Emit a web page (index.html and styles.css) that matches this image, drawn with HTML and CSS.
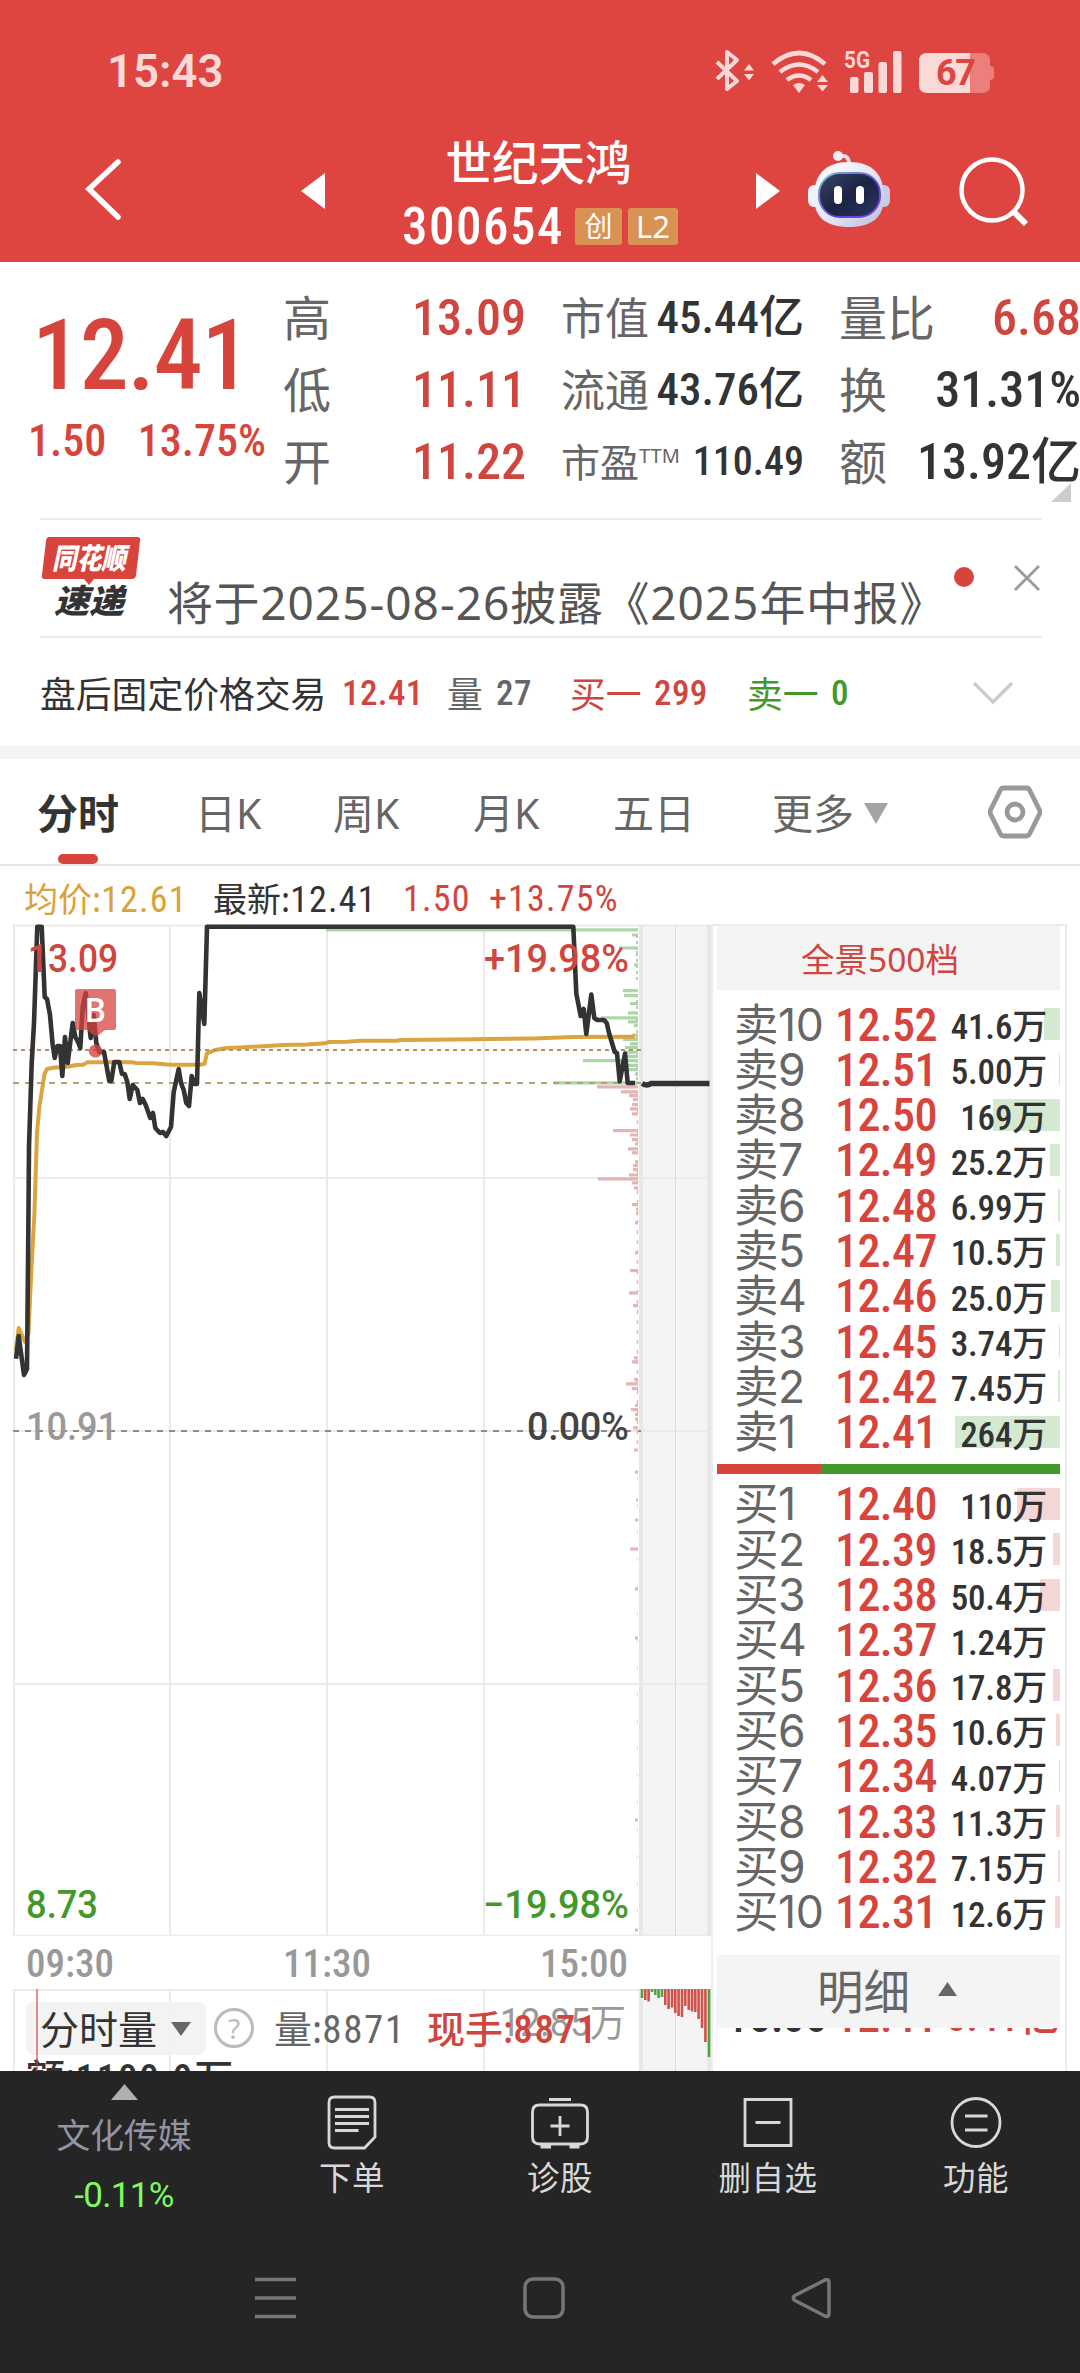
FILE: index.html
```html
<!DOCTYPE html>
<html lang="zh-CN">
<head>
<meta charset="utf-8">
<title>世纪天鸿 300654</title>
<link rel="stylesheet" href="styles.css">
</head>
<body>
<header class="header">
  <div class="status">
    <span class="clock">15:43</span>
    <svg class="status-icons" width="284" height="46" viewBox="714 49 284 46">
      <g fill="none" stroke="#fad9d7" stroke-width="4">
        <path d="M717 64l20 19-10 8V54l10 8-20 19" stroke-linejoin="round"/>
        <path d="M773 66q26-22 52 0M780 74q19-15 38 0M787 82q12-9 24 0" stroke-width="4.6"/>
      </g>
      <g fill="#fad9d7">
        <path d="M744 72.500l5-6.500 5 6.500zM744 76l5 6.500 5-6.500zM817 84l5.500-7 5.500 7zM817 87l5.500 6.500 5.500-6.500zM793 87q6-4 12 0l-6 8z"/>
        <rect x="850" y="79" width="8.500" height="16" rx="2"/><rect x="864" y="74" width="9" height="21" rx="2"/>
        <rect x="878.500" y="64" width="8.500" height="31" rx="2"/><rect x="893" y="53" width="8.500" height="42" rx="2"/>
        <path d="M927 55h43v40h-43q-8 0-8-8V63q0-8 8-8z"/>
        <path d="M970 55h12q8 0 8 8v5q4 0 4 4v6q0 4-4 4v5q0 8-8 8h-12z" fill="#ea7f7c"/>
        <text x="844" y="70" font-size="23" font-weight="700" textLength="26" lengthAdjust="spacingAndGlyphs">5G</text>
      </g>
      <text class="charge" x="936" y="87" font-size="36" font-weight="700" textLength="40">67</text>
    </svg>
  </div>
  <div class="titlebar">
    <svg class="back" width="40" height="66" viewBox="0 0 40 66"><path d="M36 6L7 33l29 28" fill="none" stroke="#fff" stroke-width="5.500" stroke-linecap="round"/></svg>
    <svg class="prev" width="24" height="38" viewBox="0 0 24 38"><path d="M24 1v36L0 19z" fill="#fff"/></svg>
    <div class="stock">
      <div class="name">世纪天鸿</div>
      <div class="code"><span class="num">300654</span><b>创</b><b class="l2">L2</b></div>
    </div>
    <svg class="next" width="24" height="38" viewBox="0 0 24 38"><path d="M0 1v36l24-18z" fill="#fff"/></svg>
    <svg class="robot" width="82" height="82" viewBox="0 0 82 82">
      <defs><linearGradient id="shell" x1="0" y1="0" x2="1" y2="1"><stop offset="0" stop-color="#fff"/><stop offset=".55" stop-color="#e4e4f5"/><stop offset="1" stop-color="#b9bce0"/></linearGradient>
      <linearGradient id="visor" x1="0" y1="0" x2="1" y2="1"><stop offset="0" stop-color="#3a4468"/><stop offset=".5" stop-color="#1b2444"/><stop offset="1" stop-color="#2c3660"/></linearGradient>
      <linearGradient id="rim" x1="0" y1="0" x2="1" y2="1"><stop offset="0" stop-color="#7cc4d8"/><stop offset=".6" stop-color="#5a3fd0"/><stop offset="1" stop-color="#7c4be0"/></linearGradient></defs>
      <path d="M31 9q10-2 10 8" fill="none" stroke="#dcdcf0" stroke-width="4"/><circle cx="30" cy="9" r="5" fill="#efeffa"/>
      <rect x="0" y="38" width="12" height="22" rx="6" fill="#f2f2fb"/><rect x="70" y="38" width="12" height="22" rx="6" fill="#c8cae8"/>
      <path d="M41 15C65 15 76 28 76 50C76 71 63 80 41 80S6 71 6 50C6 28 17 15 41 15z" fill="url(#shell)"/>
      <rect x="11" y="26" width="61" height="44" rx="21" fill="url(#visor)" stroke="url(#rim)" stroke-width="2"/>
      <rect x="26" y="39" width="8" height="18" rx="4" fill="#fff"/><rect x="48" y="39" width="8" height="18" rx="4" fill="#fff"/>
    </svg>
    <svg class="search" width="70" height="70" viewBox="0 0 70 70"><g fill="none" stroke="#fff" stroke-width="4.500"><circle cx="34" cy="34" r="30.500"/><path d="M56 56l12 12" stroke-width="6"/></g></svg>
  </div>
</header>

<section class="quote">
  <div class="last">
    <div class="num big">12.41</div>
    <div class="num chg"><span>1.50</span><span>13.75%</span></div>
  </div>
  <div class="stats c1">
    <p><span>高</span><em class="num up">13.09</em></p>
    <p><span>低</span><em class="num up">11.11</em></p>
    <p><span>开</span><em class="num up">11.22</em></p>
  </div>
  <div class="stats c2">
    <p><span>市值</span><em class="num">45.44亿</em></p>
    <p><span>流通</span><em class="num">43.76亿</em></p>
    <p class="pe"><span>市盈<sup>TTM</sup></span><em class="num">110.49</em></p>
  </div>
  <div class="stats c3">
    <p><span>量比</span><em class="num up">6.68</em></p>
    <p><span>换</span><em class="num">31.31%</em></p>
    <p><span>额</span><em class="num">13.92亿</em></p>
  </div>
  <i class="corner"></i>
</section>

<section class="notice">
  <svg class="logo" width="100" height="86" viewBox="0 0 100 86">
    <path d="M8 3h88q4 0 3 4l-4 34q-.500 4-4 4H53l-5 6-5-6H4q-4 0-3-4L5 7q.500-4 3-4z" fill="#d8433b"/>
    <text x="11" y="35" class="logo-a" textLength="74" lengthAdjust="spacingAndGlyphs">同花顺</text>
    <text x="13" y="79" class="logo-b" textLength="70" lengthAdjust="spacingAndGlyphs">速递</text>
  </svg>
  <p>将于<span>2025-08-26</span>披露《<span>2025</span>年中报》</p>
  <i class="dot"></i>
  <svg class="close" width="26" height="26" viewBox="0 0 26 26"><path d="M1 1l24 24M25 1L1 25" stroke="#999" stroke-width="2.800"/></svg>
</section>

<section class="after">
  <span class="t">盘后固定价格交易</span><span class="num up">12.41</span><span class="g">量</span><span class="num g n27">27</span>
  <span class="up t3">买一</span><span class="num up">299</span><span class="down t4">卖一</span><span class="num down n0">0</span>
  <svg width="40" height="24" viewBox="0 0 40 24"><path d="M1 1l19 19L39 1" fill="none" stroke="#ccc" stroke-width="3.500"/></svg>
</section>

<nav class="tabs">
  <span class="on">分时</span><span>日K</span><span>周K</span><span>月K</span><span>五日</span><span class="more">更多<svg width="24" height="21" viewBox="0 0 24 21"><path d="M0 0h24L12 21z" fill="#a3a3a3"/></svg></span>
  <svg class="hex" width="54" height="54" viewBox="0 0 54 54"><path d="M15.500 3h23q2 0 3 2l10 20q1 2 0 4l-10 20q-1 2-3 2h-23q-2 0-3-2l-10-20q-1-2 0-4l10-20q1-2 3-2z" fill="none" stroke="#999" stroke-width="4.800"/><circle cx="27" cy="27" r="8" fill="none" stroke="#999" stroke-width="4.800"/></svg>
</nav>

<div class="legend">
  <span class="avg">均价:<i class="num">12.61</i></span><span class="cur">最新:<i class="num">12.41</i></span><span class="num up a3">1.50</span><span class="num up">+13.75%</span>
</div>

<main class="market">
  <div class="charts">
    <svg class="price" width="711" height="1012" viewBox="0 924 711 1012">
      <rect x="641" y="925" width="69" height="1011" fill="#f4f4f4"/>
      <path d="M14 925v1011M170 925v1011M327 925v1011M484 925v1011M13 1178h697M13 1431h697M13 1684h697M13 925.500h697M13 1935.500h697" stroke="#ebebeb" stroke-width="2" fill="none"/>
      <path d="M641 925v1011M709 925v1011" stroke="#e7e7e7" stroke-width="4"/><path d="M675.500 925v1011" stroke="#dcdcdc"/>
      <path d="M13 1431h628" stroke="#8c8c8c" stroke-width="1.800" stroke-dasharray="6 6"/>
      <path d="M638 929.800H326M638 935h-6M638 948h-19M638 952.500h-2M638 964.800h-4M638 990.700h-15M638 995.700h-14M638 1003.600h-8M638 1012.900h-10M638 1017.900h-37M638 1021.800h-10M638 1025.700h-4M638 1035h-6M638 1039.300h-15M638 1043.900h-8M638 1047.500h-13M638 1052.100h-13M638 1056.400h-11M638 1060.700h-55M638 1065.400h-11M638 1069.600h-11M638 1074.300h-3M638 1078.600h-2M638 1082.900h-84" stroke="#add6a8" stroke-width="3.200"/>
      <path d="M637 935v46M637 1000v80" stroke="#add6a8" stroke-width="2" stroke-dasharray="3 3"/>
      <path d="M638 1086.800h-41M638 1091.800h-17M638 1095.700h-9M638 1099.600h-5M638 1104.600h-6M638 1108.900h-8M638 1113.900h-6M638 1130.700h-25M638 1135h-8M638 1139.600h-6M638 1144h-3M638 1148.900h-10M638 1152.900h-6M638 1161.800h-3M638 1165.700h-5M638 1169.600h-5M638 1175h-9M638 1178.900h-40M638 1182.900h-6M638 1187.900h-4M638 1204.600h-6M638 1209h-2M638 1213.600h-2M638 1222.900h-3M638 1252.900h-3M638 1270.700h-8M638 1292.900h-9M638 1305.700h-5M638 1357.900h-4M638 1361.800h-6M638 1379.600h-4M638 1383.900h-12M638 1388.600h-6M638 1405.400h-3M638 1409.600h-7M638 1414.300h-3M638 1419h-3M638 1427.900h-5M638 1450h-4M638 1472h-3M638 1500h-2M638 1520h-3M638 1549h-8M638 1589h-3M638 1638h-3M638 1820h-3M638 1930h-3" stroke="#e5b4b3" stroke-width="3.200"/>
      <path d="M637.500 1110v40M637.500 1160v290" stroke="#e5b4b3" stroke-width="1.400" stroke-dasharray="4 6"/>
      <path d="M637.500 1450v480" stroke="#f0d4d3" stroke-width="1" stroke-dasharray="3 24"/>
      <polyline fill="none" stroke="#dca43f" stroke-width="4" stroke-linejoin="round" points="16,1350 18.700,1328 25,1342 28.500,1333 31.500,1267 34.300,1217 37,1133 39.300,1107 42.500,1087 44.500,1074 47,1069 53.300,1067.700 67,1066.700 77,1065 83,1064.700 87.300,1062.300 132,1062.300 136,1063 153,1063.300 170,1064.700 200,1064.700 204.500,1063.700 207,1053.300 215,1050 227,1048 240,1047.500 267,1046 283,1045 307,1044.500 325,1043.300 329,1042 347,1041.700 360,1040.700 398,1040.700 400,1040 455,1039.600 533,1038.400 573,1037 635,1036.800"/>
      <path d="M13 1050h628" stroke="#ba8d65" stroke-width="2" stroke-dasharray="4 4"/>
      <path d="M13 1083h628" stroke="#b9a070" stroke-width="2" stroke-dasharray="6 6"/>
      <polyline fill="none" stroke="#333" stroke-width="4.600" stroke-linejoin="round" points="16,1358.700 18.700,1336 24,1375 27,1369 28.300,1233 29,1146.700 31.700,1063 34,1023 37.300,926.700 41.700,926.700 44.700,997 47,999 50,1015 52.700,1045 54.700,1058 57.300,1046 60,1046 62.300,1076 65,1037 67.700,1063 72.700,1023 75.300,1037 78,1042 80.300,1048 82.700,1007 85.700,993 90.700,1038 93.700,1015 96.300,1043 99.300,1052 104,1052 109.300,1081 111.300,1081 114.300,1062 119.300,1062 122,1074 124.700,1074 127.300,1082 129.700,1099 132.700,1085 137.300,1090 140,1103 142.700,1099 145.700,1105 150.300,1118 153,1113 155.300,1128 160,1133 163,1132 166.300,1136 171,1127 173.700,1092 178.700,1069 181,1083 183.700,1090 186.300,1103 189,1106 191.700,1076 194.300,1084 197,1084 199.300,993 204.300,1024 207,926.700 573.300,926.700 576.300,993.600 580.700,1016 583.700,1009 586.300,1034 591.300,994.600 594.300,1018 597.300,1020 604,1020 606.700,1023 609.300,1034 614.700,1052 617,1053 619.700,1081.400 625,1053.600 627.700,1083 635,1083"/>
      <path d="M642 1083.500q5 3 9 0h58.500" fill="none" stroke="#333" stroke-width="5.500"/>
      <path d="M77 989h37q2 0 2 2v37q0 2-2 2h-9l-9 7-9-7H77q-2 0-2-2v-37q0-2 2-2z" fill="#d6433f" fill-opacity=".74"/>
      <circle cx="95.500" cy="1051" r="6.600" fill="#d6433f" fill-opacity=".8"/>
      <text x="85" y="1022" class="mark">B</text>
      <g class="lbl">
        <text x="28" y="972" fill="#d0453e" textLength="90" lengthAdjust="spacingAndGlyphs">13.09</text>
        <text x="484" y="972" fill="#d0453e" textLength="145" lengthAdjust="spacingAndGlyphs">+19.98%</text>
        <text x="26" y="1440" fill="#999" textLength="92" lengthAdjust="spacingAndGlyphs">10.91</text>
        <text x="527" y="1440" fill="#444" textLength="102" lengthAdjust="spacingAndGlyphs">0.00%</text>
        <text x="26" y="1918" fill="#43982a" textLength="72" lengthAdjust="spacingAndGlyphs">8.73</text>
        <text x="483" y="1918" fill="#43982a" textLength="146" lengthAdjust="spacingAndGlyphs">−19.98%</text>
      </g>
    </svg>
    <div class="times num"><span>09:30</span><span>11:30</span><span>15:00</span></div>
    <div class="volume">
      <svg width="711" height="82" viewBox="0 1989 711 82">
        <rect x="641" y="1989" width="69" height="82" fill="#f4f4f4"/>
        <path d="M14 1989v82M170 1989v82M327 1989v82M484 1989v82M13 1990h697" stroke="#ebebeb" stroke-width="2"/>
        <path d="M641 1989v82M709 1989v82" stroke="#e7e7e7" stroke-width="4"/><path d="M675.500 1989v82" stroke="#dcdcdc"/>
        <g stroke-width="2.600">
          <path d="M642 1989v9M652 1989v3M655.300 1989v6M658.600 1989v9M662 1989v8M709 1989v68" stroke="#55a040"/>
          <path d="M645.300 1989v11M648.600 1989v12.500M665.300 1989v16M668.600 1989v20M672 1989v18.500M675.300 1989v24M678.600 1989v27M682 1989v28M685.300 1989v17M688.700 1989v21M692 1989v22.500M695.300 1989v23M698.600 1989v30M702 1989v39M705.400 1989v53" stroke="#d0524b"/>
        </g>
        <text x="500" y="2036" class="volmax" textLength="126" lengthAdjust="spacingAndGlyphs">12.85万</text>
      </svg>
      <div class="volbar">
        <span class="pick">分时量<svg width="20" height="14" viewBox="0 0 20 14"><path d="M0 0h20L10 14z" fill="#666"/></svg></span>
        <span class="help">?</span>
        <span class="v1">量:<i class="num">8871</i></span>
        <span class="v2">现手:<i class="num">8871</i></span>
        <span class="v3">额:<i class="num">1100.9</i>万</span>
        <i class="spike"></i>
      </div>
    </div>
  </div>

  <aside class="book">
    <div class="panorama">全景500档</div>
    <ul class="sell">
      <li><span>卖10</span><b class="num">12.52</b><i class="num">41.6万</i><u style="width:16px"></u></li>
      <li><span>卖9</span><b class="num">12.51</b><i class="num">5.00万</i><u style="width:1px"></u></li>
      <li><span>卖8</span><b class="num">12.50</b><i class="num">169万</i><u style="width:67px"></u></li>
      <li><span>卖7</span><b class="num">12.49</b><i class="num">25.2万</i><u style="width:10px"></u></li>
      <li><span>卖6</span><b class="num">12.48</b><i class="num">6.99万</i><u style="width:2px"></u></li>
      <li><span>卖5</span><b class="num">12.47</b><i class="num">10.5万</i><u style="width:4px"></u></li>
      <li><span>卖4</span><b class="num">12.46</b><i class="num">25.0万</i><u style="width:9px"></u></li>
      <li><span>卖3</span><b class="num">12.45</b><i class="num">3.74万</i><u style="width:1px"></u></li>
      <li><span>卖2</span><b class="num">12.42</b><i class="num">7.45万</i><u style="width:2px"></u></li>
      <li><span>卖1</span><b class="num">12.41</b><i class="num">264万</i><u style="width:105px"></u></li>
    </ul>
    <div class="ratio"></div>
    <ul class="buy">
      <li><span>买1</span><b class="num">12.40</b><i class="num">110万</i><u style="width:43px"></u></li>
      <li><span>买2</span><b class="num">12.39</b><i class="num">18.5万</i><u style="width:7px"></u></li>
      <li><span>买3</span><b class="num">12.38</b><i class="num">50.4万</i><u style="width:20px"></u></li>
      <li><span>买4</span><b class="num">12.37</b><i class="num">1.24万</i><u style="width:0px"></u></li>
      <li><span>买5</span><b class="num">12.36</b><i class="num">17.8万</i><u style="width:7px"></u></li>
      <li><span>买6</span><b class="num">12.35</b><i class="num">10.6万</i><u style="width:4px"></u></li>
      <li><span>买7</span><b class="num">12.34</b><i class="num">4.07万</i><u style="width:1px"></u></li>
      <li><span>买8</span><b class="num">12.33</b><i class="num">11.3万</i><u style="width:4px"></u></li>
      <li><span>买9</span><b class="num">12.32</b><i class="num">7.15万</i><u style="width:2px"></u></li>
      <li><span>买10</span><b class="num">12.31</b><i class="num">12.6万</i><u style="width:5px"></u></li>
    </ul>
    <div class="detail">明细<svg width="19" height="14" viewBox="0 0 19 14"><path d="M0 14h19L9.500 0z" fill="#666"/></svg></div>
    <div class="tick"><p class="num"><span>15:00</span><b>12.41</b><i>5.41亿</i></p></div>
  </aside>
</main>

<footer class="footer">
  <div class="actions">
    <div class="sector">
      <svg width="27" height="16" viewBox="0 0 27 16"><path d="M0 16h27L13.500 0z" fill="#b0b0b0"/></svg>
      <span>文化传媒</span><em>-0.11%</em>
    </div>
    <div class="act"><svg width="60" height="60" viewBox="0 0 60 60"><path d="M12.500 4h35q5.500 0 5.500 5.500V44L42.500 55h-30Q7 55 7 49.500v-40Q7 4 12.500 4zM13 16.500h34M13 23.500h34M13 30.500h34M13 37.500h23.500"/></svg><span>下单</span></div>
    <div class="act"><svg width="60" height="60" viewBox="0 0 60 60"><path d="M9.500 12h41q7 0 7 7v25q0 7-7 7h-41q-7 0-7-7V19q0-7 7-7zM19 6.500h22M30 23v20M20.500 33h19M10.500 54h10.500M39.500 54h10"/></svg><span>诊股</span></div>
    <div class="act"><svg width="60" height="60" viewBox="0 0 60 60"><path d="M7 6.500h46v46H7zM17.500 29.500h25"/></svg><span>删自选</span></div>
    <div class="act"><svg width="60" height="60" viewBox="0 0 60 60"><circle cx="30" cy="29.500" r="24"/><path d="M19 23h22.500M19 37h22.500"/></svg><span>功能</span></div>
  </div>
  <div class="sysnav">
    <svg width="42" height="42" viewBox="0 0 42 42"><path d="M0 2.500h41M0 21h41M0 39.500h41"/></svg>
    <svg width="42" height="42" viewBox="0 0 42 42"><rect x="2" y="2" width="38" height="38" rx="8"/></svg>
    <svg width="42" height="42" viewBox="0 0 42 42"><path d="M34 3L4 18.500q-3.500 2.500 0 5L34 39q4 1.500 4-3V6q0-4.500-4-3z"/></svg>
  </div>
</footer>
</body>
</html>
```
FILE: styles.css
```css
* { box-sizing: border-box; }
html, body { margin: 0; padding: 0; }
body {
  width: 1080px; height: 2373px; overflow: hidden; background: #fff; color: #333;
  font-family: "Noto Sans", "Noto Sans CJK SC", sans-serif;
}
p, ul { margin: 0; padding: 0; list-style: none; }
i, em, u { font-style: normal; text-decoration: none; }
svg { display: block; flex: none; }
.num { font-family: Roboto, "Noto Sans CJK SC", sans-serif; font-stretch: 87%; font-weight: 500; white-space: nowrap; }
.up { color: #d0453e !important; }
.down { color: #43982a; }

/* header */
.header { height: 262px; background: #de4440; color: #fff; }
.status { height: 122px; padding: 47px 82px 0 107px; display: flex; justify-content: space-between; }
.clock { font: 600 45.500px/50px Roboto, sans-serif; color: #fad9d7; }
.status-icons { font-family: Roboto, sans-serif; }
.charge { fill: #de4440; }
.titlebar { display: flex; height: 140px; align-items: flex-start; }
.back { margin: 34px 0 0 82px; }
.prev { margin: 50px 0 0 179px; }
.stock { width: 431px; text-align: center; }
.name { font-size: 46.500px; line-height: 60px; margin: 10px 4px 0 0; font-weight: 500; }
.code { display: flex; align-items: center; height: 37px; margin: 16px 0 0 77px; }
.code .num { width: 173px; text-align: left; font-size: 51px; line-height: 37px; letter-spacing: 1.500px; }
.code b { width: 47px; height: 37px; margin-right: 6px; background: #d89254; border-radius: 3px; font-size: 28px; line-height: 36px; font-weight: 400; }
.code .l2 { width: 50px; font-size: 31px; margin: 0; }
.next { margin-top: 50px; }
.robot { margin: 25px 0 0 28px; }
.search { margin: 34px 0 0 68px; }

/* quote summary */
.quote { position: relative; height: 256px; display: grid; grid-template-columns: 283px 240px 238px 239px; column-gap: 0; padding-top: 20px; }
.last { color: #d6443c; }
.big { font-size: 98px; line-height: 100px; margin: 24px 0 0 32px; letter-spacing: -1.200px; }
.chg { display: flex; justify-content: space-between; font-size: 44px; line-height: 40px; margin: 15px 17px 0 28px; }
.stats p { height: 72px; display: flex; justify-content: space-between; align-items: center; font-size: 48px; line-height: 72px; white-space: nowrap; }
.stats span { color: #666; }
.stats em { font-size: 50px; }
.c1 { width: 243px; }
.c2 { margin-left: 38px; width: 243px; }
.c2 p { font-size: 44px; }
.c2 em { font-size: 45px; }
.c2 .pe { font-size: 39px; }
.c2 .pe em { font-size: 40px; }
.pe sup { font-size: 20px; line-height: 0; vertical-align: 14px; }
.c3 { margin-left: 78px; width: 242px; }
.corner { position: absolute; left: 1051px; top: 221px; border-left: 20px solid transparent; border-bottom: 19px solid #ccc; }

/* notice */
.notice { height: 120px; margin: 0 38px 0 40px; border-top: 2px solid #ececec; border-bottom: 2px solid #ececec; display: flex; align-items: flex-start; color: #555; }
.logo { margin: 14px 0 0 1px; }
.logo-a { font: 900 italic 29px "Noto Sans CJK SC", sans-serif; fill: #fff; }
.logo-b { font: 900 italic 33px "Noto Sans CJK SC", sans-serif; fill: #333; }
.notice p { flex: none; margin: 49px 0 0 26px; width: 787px; font-size: 46px; line-height: 66px; white-space: nowrap; letter-spacing: .6px; }
.notice p span { letter-spacing: 1px; }
.dot { width: 20px; height: 20px; margin: 47px 40px 0 0; border-radius: 50%; background: #d6443c; flex: none; }
.close { margin-top: 45px; }

/* after-hours row */
.after { height: 108px; padding: 3px 0 0 40px; display: flex; align-items: center; font-size: 35.800px; line-height: 50px; }
.after .num { font-size: 35px; letter-spacing: .4px; }
.after .t { width: 302px; }
.after .t + .num { width: 105px; }
.after .g { color: #666; width: 49px; }
.after .n27 { width: 74px; }
.after .t3, .after .t4 { width: 84px; }
.after .t3 + .num { width: 93px; }
.after .n0 { width: 142px; }

/* period tabs */
.tabs { position: relative; height: 120px; border-top: 13px solid #f4f4f4; border-bottom: 2px solid #e6e6e6; padding-top: 21px; display: grid; grid-template-columns: 158px 138px 140px 140px 159px 216px 54px; margin: 0; padding-left: 37px; font-size: 41px; line-height: 66px; color: #666; align-items: start; }
.tabs .on { font-weight: 700; color: #333; }
.tabs .on::after { content: ""; display: block; width: 40px; height: 10px; margin: 8px 0 0 21px; border-radius: 5px; background: #d6443c; }
.more { display: flex; align-items: center; gap: 10px; }
.hex { margin-top: 5px; }

.legend { height: 58px; padding-left: 24px; display: flex; font-size: 34px; line-height: 66px; }
.legend .num { font-size: 36px; font-weight: 450; letter-spacing: 1.200px; }
.avg { color: #dba13b; width: 189px; }
.cur { width: 190px; }
.a3 { width: 86px; }

/* charts and order book */
.market { height: 1147px; display: grid; grid-template-columns: 711px 356px; overflow: hidden; }
.lbl { font: 500 39px Roboto, sans-serif; }
.mark { font: 500 33px Roboto, sans-serif; fill: #fff; }
.times { height: 53px; padding: 0 83px 0 26px; display: flex; justify-content: space-between; font-size: 39px; line-height: 56px; color: #999; }
.volume { display: grid; height: 82px; overflow: hidden; }
.volume > * { grid-area: 1 / 1; }
.volmax { font: 38px Roboto, "Noto Sans CJK SC", sans-serif; fill: #999; }
.volbar { position: relative; height: 82px; padding-left: 26px; display: grid; grid-template-columns: 180px 57px 11px 153px 240px; grid-template-rows: 66px 40px; font-size: 38px; line-height: 53px; white-space: nowrap; }
.volbar .num { font-size: 39px; letter-spacing: 1.700px; }
.pick { height: 53px; margin-top: 13px; padding-left: 14px; background: #f2f2f2e8; border-radius: 8px; display: flex; align-items: center; gap: 14px; font-size: 39px; }
.help { width: 40px; height: 40px; margin: 19px 0 0 8px; border: 3px solid #bbb; border-radius: 50%; color: #bbb; font-size: 28px; line-height: 34px; text-align: center; }
.v1 { grid-column: 4; margin-top: 13px; color: #666; }
.v1 .num { font-weight: 450; }
.v2 { margin-top: 13px; color: #d0453e; font-weight: 500; }
.v3 { grid-column: 1 / 4; margin-top: -5px; font-weight: 500; font-size: 39px; }
.spike { position: absolute; left: 36px; top: 0; width: 2px; height: 82px; background: #d0453e99; }

.book { border: 2px solid #ececec; border-bottom: 0; padding: 0 5px 0 4px; height: 1147px; }
.panorama { height: 64px; background: #f4f4f4; color: #d0453e; font-size: 33.500px; line-height: 66px; text-align: center; padding-right: 17px; }
.sell { margin-top: 10px; }
.book li { position: relative; height: 45.300px; padding-left: 17px; display: grid; grid-template-columns: 101px 100px 112px 13px; align-items: center; line-height: 45px; isolation: isolate; }
.book li span { font: 44.500px/45px Inter, "Noto Sans CJK SC", sans-serif; color: #666; white-space: nowrap; letter-spacing: -.4px; }
.book li b { font-size: 46px; color: #d6443c; font-weight: 550; letter-spacing: -.6px; }
.book li i { font-size: 35px; text-align: right; padding-top: 5px; letter-spacing: -.2px; }
.book li u { position: absolute; right: 0; top: 8px; height: 32px; background: #d3ead0; z-index: -1; }
.buy u { background: #f4d6d7 !important; }
.ratio { height: 10px; margin: 11px 0 6px; background: linear-gradient(90deg, #d6443c 104px, #43982a 104px); }
.detail { height: 73px; margin-top: 22px; padding-left: 100px; display: flex; align-items: center; gap: 28px; background: #f4f4f4; color: #666; font-size: 46.500px; line-height: 77px; }
.detail svg { margin-top: -4px; }
.tick { height: 10px; overflow: hidden; }
.tick p { margin-top: -36px; padding-left: 9px; display: flex; font-size: 45px; line-height: 50px; }
.tick span { width: 110px; }
.tick b { width: 112px; font-weight: 500; color: #d0453e; }
.tick i { color: #d0453e; font-size: 41px; }

/* footer */
.footer { height: 302px; background: #252525; color: #d8d8d8; }
.actions { height: 190px; display: grid; grid-template-columns: 248px 208px 208px 208px 208px; }
.sector { padding: 13px 0 0; display: flex; flex-direction: column; align-items: center; font-size: 33.800px; line-height: 50px; color: #9394a6; }
.sector svg { margin-bottom: 10px; }
.sector em { margin-top: 11px; color: #7dfb5d; font-size: 35px; font-family: Roboto, sans-serif; letter-spacing: -.7px; }
.act { display: flex; flex-direction: column; align-items: center; padding-top: 22px; font-size: 32.500px; line-height: 50px; }
.act svg { fill: none; stroke: #d8d8d8; stroke-width: 2.800; }
.act span { letter-spacing: .5px; }
.sysnav { display: flex; padding: 16px 0 0 255px; gap: 226px; }
.sysnav svg { fill: none; stroke: #777; stroke-width: 3.500; }
```
